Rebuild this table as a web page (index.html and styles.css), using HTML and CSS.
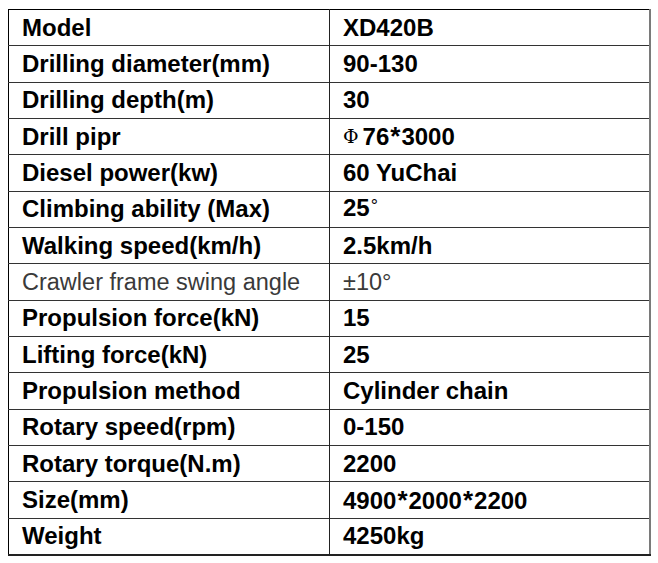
FILE: index.html
```html
<!DOCTYPE html>
<html>
<head>
<meta charset="utf-8">
<link rel="stylesheet" href="styles.css">
</head>
<body>
<table class="spec">
  <tr><td class="k">Model</td><td class="v">XD420B</td></tr>
  <tr><td class="k">Drilling diameter(mm)</td><td class="v">90-130</td></tr>
  <tr><td class="k">Drilling depth(m)</td><td class="v">30</td></tr>
  <tr><td class="k">Drill pipr</td><td class="v"><span class="phi">Φ</span>76<span class="ast">*</span>3000</td></tr>
  <tr><td class="k">Diesel power(kw)</td><td class="v">60 YuChai</td></tr>
  <tr><td class="k">Climbing ability (Max)</td><td class="v">25<span class="deg">°</span></td></tr>
  <tr><td class="k">Walking speed(km/h)</td><td class="v">2.5km/h</td></tr>
  <tr><td class="k light">Crawler frame swing angle</td><td class="v light">±10°</td></tr>
  <tr><td class="k">Propulsion force(kN)</td><td class="v">15</td></tr>
  <tr><td class="k">Lifting force(kN)</td><td class="v">25</td></tr>
  <tr><td class="k">Propulsion method</td><td class="v">Cylinder chain</td></tr>
  <tr><td class="k">Rotary speed(rpm)</td><td class="v">0-150</td></tr>
  <tr><td class="k">Rotary torque(N.m)</td><td class="v">2200</td></tr>
  <tr><td class="k">Size(mm)</td><td class="v">4900<span class="ast">*</span>2000<span class="ast">*</span>2200</td></tr>
  <tr><td class="k">Weight</td><td class="v">4250kg</td></tr>
</table>
</body>
</html>
```
FILE: styles.css
```css
html, body {
  margin: 0;
  padding: 0;
  background: #ffffff;
}
body {
  padding: 9px 0 0 8px;
}
.spec {
  border-collapse: collapse;
  width: 643px;
  font-family: "Liberation Sans", Arial, sans-serif;
  font-size: 24px;
  font-weight: bold;
  color: #000;
  border-top: 1px solid #000;
  border-left: 1px solid #000;
  border-bottom: 2px solid #222;
  border-right: 2px solid #7a7a7a;
}
.spec td {
  height: 35.35px;
  padding: 0 0 0 13px;
  border-top: 1px solid #333;
  line-height: 26px;
  vertical-align: middle;
  white-space: nowrap;
}
.spec tr:first-child td {
  border-top: 1px solid #000;
}
.spec td.k {
  width: 307px;
  border-right: 1px solid #222;
}
.spec td.light {
  font-weight: normal;
  font-size: 23.5px;
  color: #3a3a3a;
}
.phi {
  font-family: "DejaVu Serif", "Liberation Serif", serif;
  font-weight: normal;
  font-size: 19px;
  margin-right: 4px;
  position: relative;
  top: -2px;
}
.ast {
  font-size: 26px;
  margin: 0 1px;
}
.deg {
  font-weight: normal;
  font-size: 18px;
  position: relative;
  top: -4px;
  margin-left: 1px;
}
```
